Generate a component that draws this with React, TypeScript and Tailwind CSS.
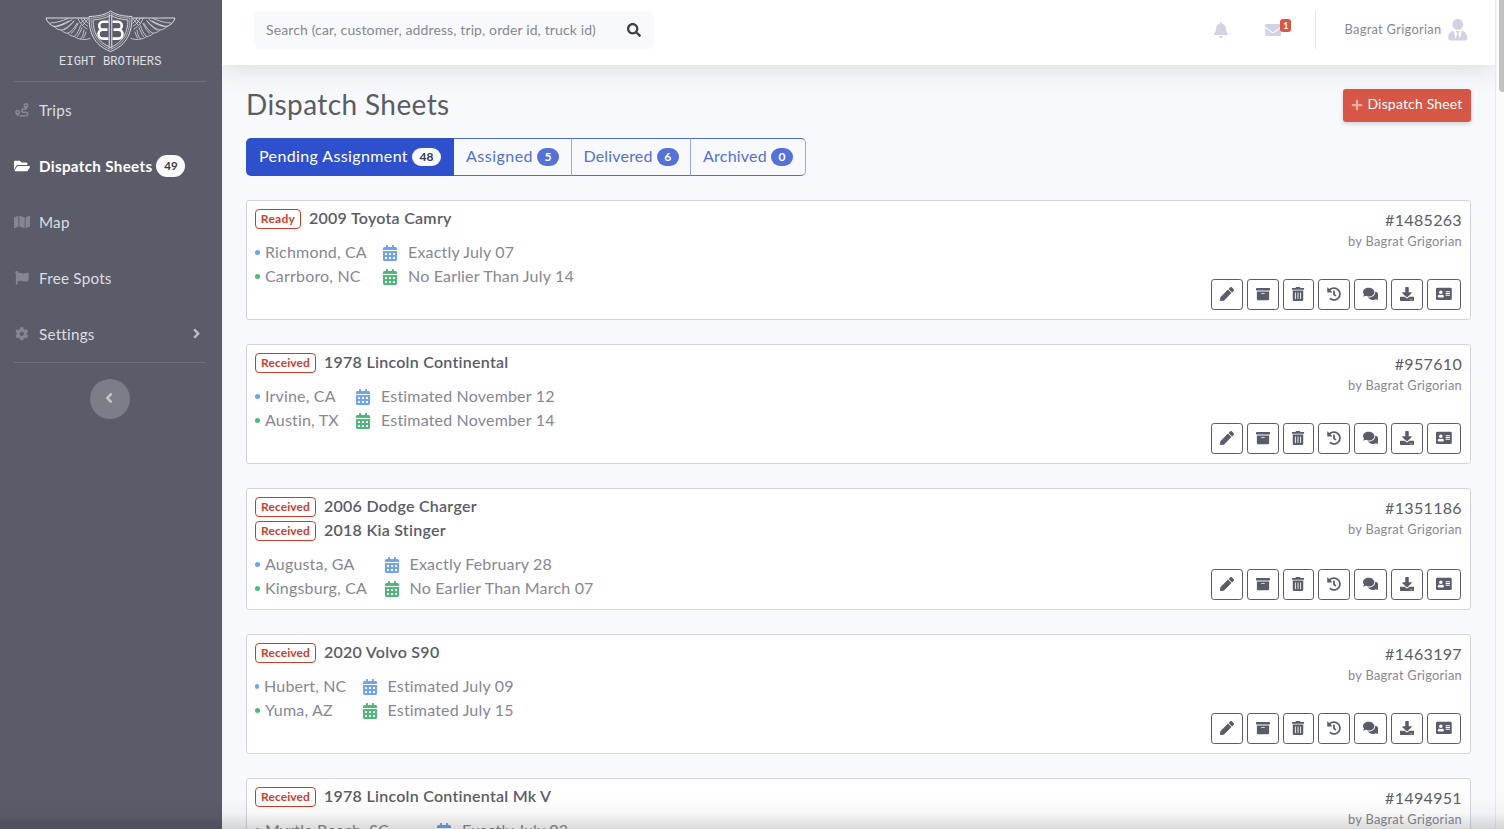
import type { ReactNode } from "react";
import {
  FaAddressCard,
  FaAngleLeft,
  FaAngleRight,
  FaArchive,
  FaBell,
  FaCalendarAlt,
  FaCog,
  FaComments,
  FaDownload,
  FaEnvelope,
  FaFlag,
  FaFolderOpen,
  FaHistory,
  FaMap,
  FaPen,
  FaPlus,
  FaRoute,
  FaSearch,
  FaTrashAlt,
  FaUserTie,
} from "react-icons/fa";

type Sheet = {
  id: string;
  cars: { status: string; name: string }[];
  from: [string, string];
  to?: [string, string];
  cityWidth?: string;
};

const sheets: Sheet[] = [
  {
    id: "#1485263",
    cars: [{ status: "Ready", name: "2009 Toyota Camry" }],
    from: ["Richmond, CA", "Exactly July 07"],
    to: ["Carrboro, NC", "No Earlier Than July 14"],
    cityWidth: "w-[112px]",
  },
  {
    id: "#957610",
    cars: [{ status: "Received", name: "1978 Lincoln Continental" }],
    from: ["Irvine, CA", "Estimated November 12"],
    to: ["Austin, TX", "Estimated November 14"],
    cityWidth: "w-[85px]",
  },
  {
    id: "#1351186",
    cars: [
      { status: "Received", name: "2006 Dodge Charger" },
      { status: "Received", name: "2018 Kia Stinger" },
    ],
    from: ["Augusta, GA", "Exactly February 28"],
    to: ["Kingsburg, CA", "No Earlier Than March 07"],
    cityWidth: "w-[113.500px]",
  },
  {
    id: "#1463197",
    cars: [{ status: "Received", name: "2020 Volvo S90" }],
    from: ["Hubert, NC", "Estimated July 09"],
    to: ["Yuma, AZ", "Estimated July 15"],
    cityWidth: "w-[91.500px]",
  },
  {
    id: "#1494951",
    cars: [{ status: "Received", name: "1978 Lincoln Continental Mk V" }],
    from: ["Myrtle Beach, SC", "Exactly July 03"],
    cityWidth: "w-[166px]",
  },
];

function Wing() {
  return (
    <g fill="none" stroke="#dcdce1" strokeWidth="0.8" strokeLinejoin="round" strokeLinecap="round">
      <path d="M43 8H1c1 4 4 7 8 8.500c4 0 10-3 15-5.500" strokeWidth="1" />
      <path d="M5 13c6 0 12-2 18-4.500M9 16.500c2 2 4 3.200 7 3.500c5-1 9-5 13-9M12 16.500c6-1 11-4 15-7" />
      <path d="M16 20c2 2 4 3 7 3.300c4-2 7-6 9-10M19 20c4-2 8-6 10-9" />
      <path d="M23 23.500c2 2 4 2.800 6.500 3c3-3 5-7 6-11M26 23.500c3-2 5-6 7-10" />
      <path d="M29.500 26.500c2 1.800 4 2.300 6 2.500c2-2 3-5 3.500-9M32.500 26.500c2-3 3.500-6 4.500-9" />
      <path d="M35.500 29c3 1 6 .5 9.500-.5M38.500 28c1-2 2-4 2.500-6M33 8c1 4 4 8 9 11M36 8c1 3 3 6 6.500 8M39 8c1 2 2 4 4 5M43 9l-5 6M40 9l-4 4" />
    </g>
  );
}

function Logo() {
  return (
    <svg width="132" height="60" viewBox="0 0 132 60" className="block">
      <Wing />
      <g transform="translate(131 0) scale(-1 1)">
        <Wing />
      </g>
      <path
        d="M65.500 1c-5 3.500-12 5.300-21.500 5.500c0 15.500 4.500 28.500 21.500 35c17-6.500 21.500-19.500 21.500-35c-9.500-.2-16.500-2-21.500-5.500z"
        fill="#5a5c69"
        stroke="#dcdce1"
        strokeWidth="1"
      />
      <path
        d="M65.500 3c-5 3.200-11.500 4.800-19.500 5.200c.3 14 4.500 25 19.500 31.200c15-6.200 19.200-17.200 19.500-31.200c-8-.4-14.500-2-19.500-5.200z"
        fill="none"
        stroke="#b9bac1"
        strokeWidth="0.900"
      />
      <path
        d="M65.500 5.200c-4.500 2.800-10.500 4.300-17.500 4.800c.4 12.500 4.500 22 17.500 27.400c13-5.400 17.100-14.900 17.500-27.400c-7-.5-13-2-17.500-4.800z"
        fill="none"
        stroke="#dcdce1"
        strokeWidth="0.900"
      />
      <g fill="none" stroke="#fff" strokeWidth="2.600">
        <path d="M63.500 11.800h-5.500c-5 0-5 7.800 0 7.800h4.500M62.500 19.600h-4.500c-6 0-6 9 0 9h5.500" />
        <path d="M67.500 11.800h5.500c5 0 5 7.800 0 7.800h-4.500M68.500 19.600h4.500c6 0 6 9 0 9h-5.500" />
      </g>
      <path d="M64.300 4.500v34M66.700 4.500v34" stroke="#c4c5cb" strokeWidth="1.300" fill="none" />
      <text
        x="14"
        y="55"
        textLength="102.500"
        lengthAdjust="spacing"
        fontSize="12.200"
        fill="#e0e0e5"
        className="font-['Liberation_Mono',monospace]"
      >
        EIGHT BROTHERS
      </text>
    </svg>
  );
}

function NavItem({
  icon,
  label,
  active,
  badge,
  arrow,
}: {
  icon: ReactNode;
  label: string;
  active?: boolean;
  badge?: string;
  arrow?: boolean;
}) {
  return (
    <a className="flex h-14 items-center pr-5 pl-3.5">
      <span className={`flex w-4 justify-center ${active ? "text-white" : "text-[#85868f]"}`}>{icon}</span>
      <span
        className={`ml-[9px] text-[15.2px] ${
          active ? "font-bold tracking-[0.32px] text-white" : "tracking-[0.25px] text-[#dedee1]"
        }`}
      >
        {label}
      </span>
      {badge && (
        <span className="ml-1 flex h-[22px] w-[29px] items-center justify-center rounded-full bg-[#f8f9fc] text-[11.5px] font-bold text-[#3a3b45]">
          {badge}
        </span>
      )}
      {arrow && <FaAngleRight className="-mr-0.5 ml-auto text-[15.2px] text-[#bdbec3]" />}
    </a>
  );
}

function Sidebar() {
  return (
    <aside className="flex w-[222px] shrink-0 flex-col bg-[#5a5c69]">
      <div className="flex h-[81px] justify-center pt-2.5">
        <Logo />
      </div>
      <div className="mr-4 ml-3.5 h-px bg-[#6e707b]" />
      <nav className="flex flex-col">
        <NavItem icon={<FaRoute className="text-[13.6px]" />} label="Trips" />
        <NavItem icon={<FaFolderOpen className="text-base" />} label="Dispatch Sheets" active badge="49" />
        <NavItem icon={<FaMap className="text-base" />} label="Map" />
        <NavItem icon={<FaFlag className="text-[13.6px]" />} label="Free Spots" />
        <NavItem icon={<FaCog className="text-[13.6px]" />} label="Settings" arrow />
      </nav>
      <div className="mr-4 ml-3.5 h-px bg-[#6e707b]" />
      <button className="mt-4 ml-[90px] flex size-10 items-center justify-center rounded-full bg-[#7b7d87]">
        <FaAngleLeft className="mr-0.5 -mt-0.5 text-base text-[#c6c7cb]" />
      </button>
    </aside>
  );
}

function Topbar() {
  return (
    <header className="z-10 flex h-[65px] shrink-0 items-start bg-white shadow-[0_2.4px_28px_0_rgba(58,59,69,0.17)]">
      <div className="mt-[11px] ml-8 flex h-[38px] w-[400px] items-center rounded-md bg-[#f8f9fc] pr-[13px] pl-3">
        <span className="text-sm tracking-[0.12px] whitespace-nowrap text-[#858796]">
          Search (car, customer, address, trip, order id, truck id)
        </span>
        <FaSearch className="ml-auto text-sm text-[#3a3b45]" />
      </div>
      <div className="mt-[11px] ml-auto flex h-[38px] items-center">
        <FaBell className="text-base text-[#d1d3e2]" />
        <div className="relative ml-9">
          <FaEnvelope className="text-base text-[#d1d3e2]" />
          <span className="absolute -top-[3px] left-[15px] flex h-[13px] w-[11px] items-center justify-center rounded-[3px] bg-[#d65745] text-[9px] font-bold text-white">
            1
          </span>
        </div>
        <div className="ml-[34px] h-[38px] w-px bg-[#e3e6f0]" />
        <span className="ml-7 text-[12.8px] tracking-[0.32px] text-[#858796]">Bagrat Grigorian</span>
        <FaUserTie className="mr-[27px] ml-[5px] text-[21.500px] text-[#d1d3e2]" />
      </div>
    </header>
  );
}

function Tab({
  label,
  count,
  active,
  className,
}: {
  label: string;
  count: number;
  active?: boolean;
  className: string;
}) {
  return (
    <button
      className={`flex h-full items-center text-base ${
        active ? "bg-[#2e50cc] text-white" : "border-y border-r border-y-[#4e6dd8] border-r-[#97a8e8] text-[#5470d9]"
      } ${className}`}
    >
      <span className="pb-0.5">{label}</span>
      <span
        className={`ml-1 flex h-[18px] items-center justify-center rounded-full text-xs font-bold tracking-normal ${
          active ? "w-[29px] bg-[#f8f9fc] text-[#3a3b45]" : "w-[22px] bg-[#5470d9] text-white"
        }`}
      >
        {count}
      </span>
    </button>
  );
}

const actions = [
  { name: "edit", Icon: FaPen, button: "w-8", icon: "size-3.5" },
  { name: "archive", Icon: FaArchive, button: "w-8", icon: "size-3.5" },
  { name: "delete", Icon: FaTrashAlt, button: "w-[30.25px]", icon: "size-3.5" },
  { name: "history", Icon: FaHistory, button: "w-8", icon: "size-3.5" },
  { name: "comments", Icon: FaComments, button: "w-[33.75px]", icon: "size-[15.75px]" },
  { name: "download", Icon: FaDownload, button: "w-8", icon: "size-3.5" },
  { name: "contact", Icon: FaAddressCard, button: "w-[33.75px]", icon: "size-[15.75px]" },
];

function Stop({ stop, pickup, cityWidth }: { stop: [string, string]; pickup?: boolean; cityWidth?: string }) {
  return (
    <div className="flex h-6 items-center">
      <span className={`flex items-center ${cityWidth}`}>
        <span className={`mr-[5px] size-[5px] rounded-full ${pickup ? "bg-[#6ea5ec]" : "bg-[#4fb97b]"}`} />
        {stop[0]}
      </span>
      <FaCalendarAlt className={`mt-0.5 ml-[15px] text-base ${pickup ? "text-[#6ea5ec]" : "text-[#4fb97b]"}`} />
      <span className="ml-2.5">{stop[1]}</span>
    </div>
  );
}

function SheetCard({ sheet }: { sheet: Sheet }) {
  return (
    <article className="flex h-[120px] shrink-0 justify-between rounded-[3px] border border-[#d1d3e2] bg-white pt-[5px] pr-2 pl-2 has-[.car+.car]:h-[122px]">
      <div>
        {sheet.cars.map((car) => (
          <div key={car.name} className="car flex h-6 items-center">
            <span
              className={`mt-0.5 flex h-5 items-center justify-center rounded-[4px] border border-[#cc3e2c] text-xs font-bold text-[#cc3e2c] ${
                car.status === "Ready" ? "w-[46px] tracking-[0.3px]" : "w-[61px] tracking-[0.1px]"
              }`}
            >
              {car.status}
            </span>
            <span className="ml-2 text-base font-semibold tracking-[0.26px] text-[#5a5c69]">{car.name}</span>
          </div>
        ))}
        <div className="mt-2.5 text-base leading-6 tracking-[0.18px] whitespace-nowrap text-[#858796]">
          <Stop stop={sheet.from} pickup cityWidth={sheet.cityWidth} />
          {sheet.to && <Stop stop={sheet.to} cityWidth={sheet.cityWidth} />}
        </div>
      </div>
      <div className="flex flex-col items-end">
        <span className="mt-0.5 text-base leading-6 tracking-[0.34px] text-[#5a5c69]">{sheet.id}</span>
        <span className="-mt-px text-[12.8px] leading-5 tracking-[0.29px] text-[#858796]">by Bagrat Grigorian</span>
        <div className="mt-auto mr-px mb-[9px] flex gap-1">
          {actions.map(({ name, Icon, button, icon }) => (
            <button
              key={name}
              className={`flex h-[31px] shrink-0 items-center justify-center rounded-[3.200px] border border-[#5a5c69] pb-px text-[#5a5c69] ${button}`}
            >
              <Icon className={icon} />
            </button>
          ))}
        </div>
      </div>
    </article>
  );
}

export default function App() {
  return (
    <div className="relative flex h-[829px] w-[1504px] overflow-hidden bg-[#f8f9fc] font-['Lato',sans-serif]">
      <Sidebar />
      <div className="flex min-w-0 flex-1 flex-col overflow-hidden">
        <Topbar />
        <main className="flex flex-col px-6 pt-6">
          <div className="flex h-[33px] items-center justify-between">
            <h1 className="pb-0.5 text-[28px] leading-[33px] tracking-[0.4px] text-[#5a5c69]">Dispatch Sheets</h1>
            <button className="flex h-[33px] w-32 items-center justify-center rounded-[3px] bg-[#d65745] pb-[3px] text-sm tracking-[0.17px] text-white shadow-[0_2px_4px_rgba(58,59,69,0.2)]">
              <FaPlus className="mt-0.5 mr-1 text-[12px] text-white/50" />
              Dispatch Sheet
            </button>
          </div>
          <div className="mt-4 flex h-[38px]">
            <Tab label="Pending Assignment" count={48} active className="w-52 rounded-l-[5px] pl-[13px] tracking-[0.38px]" />
            <Tab label="Assigned" count={5} className="w-[117.500px] pl-3 tracking-[0.48px]" />
            <Tab label="Delivered" count={6} className="w-[119.500px] pl-3 tracking-[0.18px]" />
            <Tab label="Archived" count={0} className="w-[114.500px] rounded-r-[5px] pl-3 tracking-[0.23px]" />
          </div>
          <div className="mt-6 flex flex-col gap-6">
            {sheets.map((s) => (
              <SheetCard key={s.id} sheet={s} />
            ))}
          </div>
        </main>
      </div>
      <div className="flex w-[9px] shrink-0 justify-end border-l border-[#e8e8e8] bg-[#fafafa]">
        <div className="h-[92px] w-[5px] rounded-bl-[4px] bg-[#c1c1c1]" />
      </div>
      <div className="pointer-events-none absolute right-0 bottom-0 left-0 z-20 h-8 bg-linear-to-b from-black/0 via-black/3 to-black/15" />
    </div>
  );
}
